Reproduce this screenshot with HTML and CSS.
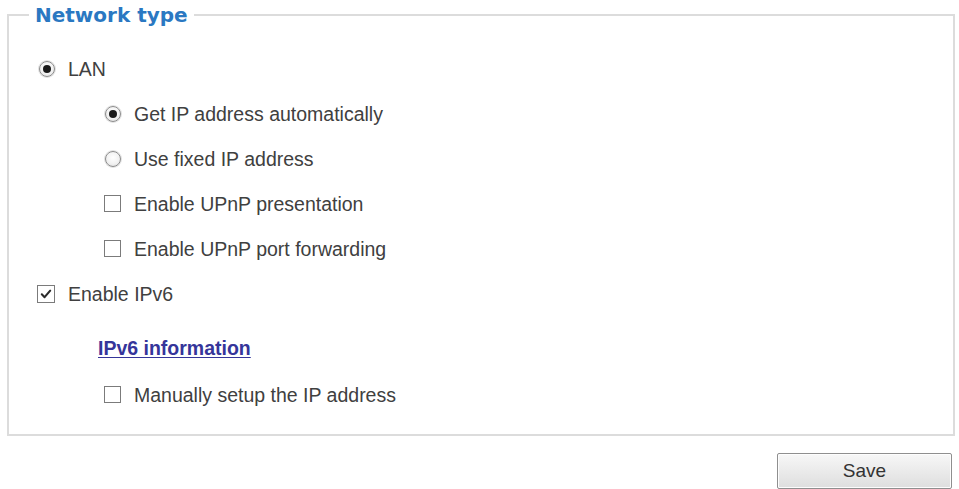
FILE: index.html
```html
<!DOCTYPE html>
<html lang="en">
<head>
<meta charset="utf-8">
<title>Network type</title>
<link rel="stylesheet" href="styles.css">
</head>
<body>
<div class="page">
  <fieldset class="group">
    <legend class="group-title">Network type</legend>
    <div class="row lvl1">
      <span class="cell"><span class="radio on r1"></span></span>
      <span class="label">LAN</span>
    </div>
    <div class="row lvl2">
      <span class="cell"><span class="radio on r2"></span></span>
      <span class="label">Get IP address automatically</span>
    </div>
    <div class="row lvl2">
      <span class="cell"><span class="radio r2"></span></span>
      <span class="label">Use fixed IP address</span>
    </div>
    <div class="row lvl2">
      <span class="cell"><span class="check"></span></span>
      <span class="label">Enable UPnP presentation</span>
    </div>
    <div class="row lvl2">
      <span class="cell"><span class="check"></span></span>
      <span class="label">Enable UPnP port forwarding</span>
    </div>
    <div class="row lvl1">
      <span class="cell"><span class="check checked"><svg viewBox="0 0 16 16" width="14" height="14"><path d="M3.2 8.4 L6.4 11.6 L12.8 4.2" fill="none" stroke="#2b2b2b" stroke-width="2.4" stroke-linecap="round" stroke-linejoin="round"/></svg></span></span>
      <span class="label">Enable IPv6</span>
    </div>
    <div class="row link-row">
      <a class="info-link" href="#">IPv6 information</a>
    </div>
    <div class="row lvl2 last">
      <span class="cell"><span class="check"></span></span>
      <span class="label">Manually setup the IP address</span>
    </div>
  </fieldset>
  <div class="actions">
    <button class="btn" type="button">Save</button>
  </div>
</div>
</body>
</html>
```
FILE: styles.css
```css
html, body {
  margin: 0;
  padding: 0;
  background: #ffffff;
}
body {
  font-family: "Liberation Sans", Arial, sans-serif;
  font-size: 19.5px;
  color: #404040;
}
.page {
  padding: 3px 4px 0 7px;
}
.group {
  margin: 0;
  border: 2px solid #dcdcdc;
  padding: 19px 0 17px 0;
  min-width: 0;
}
.group-title {
  margin-left: 20px;
  padding: 0 6px;
  font-family: "DejaVu Sans", Verdana, sans-serif;
  font-weight: bold;
  font-size: 20px;
  line-height: 24px;
  color: #2a78c2;
}
.row {
  display: flex;
  align-items: center;
  height: 45px;
}
.lvl1 { padding-left: 28px; }
.lvl2 { padding-left: 95px; }
.cell {
  width: 30px;
  display: flex;
  align-items: center;
}
.lvl1 .cell { width: 31px; }
.label {
  line-height: 24px;
}
.radio {
  box-sizing: border-box;
  width: 16px;
  height: 16px;
  border-radius: 50%;
  border: 1px solid #8c8c8c;
  background: radial-gradient(circle at 50% 40%, #ffffff 0%, #f2f2f2 55%, #d8d8d8 100%);
  box-shadow: 0 0 0 1px #e2e2e2;
  display: flex;
  align-items: center;
  justify-content: center;
}
.radio.r1 { margin-left: 2px; }
.radio.r2 { margin-left: 1px; }
.radio.on::after {
  content: "";
  width: 8px;
  height: 8px;
  border-radius: 50%;
  background: #1a1a1a;
}
.check {
  box-sizing: border-box;
  width: 17px;
  height: 17px;
  border: 1.5px solid #7b7b7b;
  background: #ffffff;
  display: flex;
  align-items: center;
  justify-content: center;
}
.lvl1 .check { width: 18px; height: 18px; }
.link-row {
  padding-left: 89px;
  margin-top: 10px;
}
.last { margin-top: 1px; }
.info-link {
  font-weight: bold;
  color: #35359a;
  text-decoration: underline;
  text-underline-offset: 2px;
}
.actions {
  display: flex;
  justify-content: flex-end;
  padding-top: 17px;
  padding-right: 3px;
}
.btn {
  width: 175px;
  height: 36px;
  font-family: "Liberation Sans", Arial, sans-serif;
  font-size: 19px;
  color: #333333;
  border: 1px solid #8f8f8f;
  border-radius: 2px;
  background: linear-gradient(#f7f7f7, #dedede);
  box-shadow: inset 0 0 0 1px #fdfdfd;
  padding: 0;
}
```
